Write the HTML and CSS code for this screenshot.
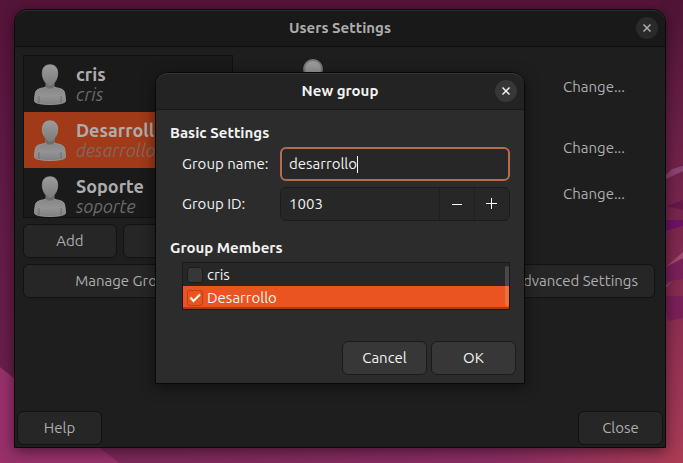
FILE: index.html
```html
<!DOCTYPE html>
<html lang="en">
<head>
<meta charset="utf-8">
<title>Users Settings</title>
<link rel="stylesheet" href="styles.css">
</head>
<body>
<svg class="wallpaper" viewBox="0 0 683 463" preserveAspectRatio="none" aria-hidden="true">
  <defs>
    <linearGradient id="sky" x1="0" y1="0" x2="0" y2="1">
      <stop offset="0" stop-color="#551439"/>
      <stop offset=".5" stop-color="#631c47"/>
      <stop offset="1" stop-color="#6b2049"/>
    </linearGradient>
    <linearGradient id="hill" x1="0" y1="0" x2="1" y2="0">
      <stop offset="0" stop-color="#7a2857"/>
      <stop offset=".7" stop-color="#8a2c63"/>
      <stop offset="1" stop-color="#ab3b55"/>
    </linearGradient>
    <linearGradient id="east" x1="0" y1="0" x2="0" y2="1">
      <stop offset="0" stop-color="#4e1436"/>
      <stop offset=".3" stop-color="#6c2047"/>
      <stop offset=".6" stop-color="#83294f"/>
      <stop offset="1" stop-color="#a73a56"/>
    </linearGradient>
  </defs>
  <path fill="url(#sky)" d="M0 0h683v463H0z"/>
  <path fill="url(#hill)" d="M60 440h623v23H60z"/>
  <path fill="#97306b" d="M0 367L119 463H0z"/>
  <path fill="url(#east)" d="M660 0h23v450h-23z"/>
  <path fill="#8c4474" d="M664 177l8-8 11-3v5l-19 9z"/>
  <path fill="#65184a" d="M667 206l16-6v10z"/>
  <path fill="#6d1263" d="M664 220h19v6l-19 5z"/>
  <path fill="#7a1f58" d="M664 267l19-10v22l-19 3zM664 296h19v22l-15 3z"/>
  <path fill="#a04a72" d="M666 267l17-15v6zM664 287l8-6-5 6z"/>
</svg>

<main class="window">
  <header class="titlebar">
    <h1>Users Settings</h1>
    <button class="close" aria-label="Close window"><svg viewBox="0 0 22 22"><path d="M7.500 7.500l7 7m0-7l-7 7"/></svg></button>
  </header>
  <div class="content">
    <div class="columns">
      <section class="side">
        <svg class="defs" aria-hidden="true">
          <defs>
            <linearGradient id="skin" x1="0" y1="0" x2="0" y2="1">
              <stop offset="0" stop-color="#9c9c9c"/><stop offset="1" stop-color="#7c7c7c"/>
            </linearGradient>
            <linearGradient id="shirt" x1="0" y1="0" x2="0" y2="1">
              <stop offset="0" stop-color="#808080"/><stop offset=".6" stop-color="#949494"/><stop offset="1" stop-color="#808080"/>
            </linearGradient>
            <symbol id="person" viewBox="0 0 32 41">
              <path fill="url(#shirt)" stroke="#a0a0a0" stroke-width=".8" d="M12 19v4c-2 1-8 1-10 4C1 29 .5 34 .5 37c0 2 6 3.500 15.500 3.500S31.500 39 31.500 37c0-3-.5-8-1.500-10-2-3-8-3-10-4v-4z"/>
              <path fill="#666" opacity=".8" d="M12 19l4 3 4-3v4c-2 2-6 2-8 0z"/>
              <path fill="url(#skin)" stroke="#a0a0a0" stroke-width=".7" d="M16 .7c5 0 7.700 3.300 7.700 8.300 0 6-3.700 12-7.700 12S8.300 15 8.300 9C8.300 4 11 .7 16 .7z"/>
              <path fill="none" stroke="#666" stroke-width=".8" d="M9.500 15c1.500 4 4 6.300 6.500 6.300s5-2.300 6.500-6.300M5 32v7M27 32v7"/>
            </symbol>
          </defs>
        </svg>
        <ul class="users">
          <li><svg class="avatar"><use href="#person"/></svg><div><b>cris</b><i>cris</i></div></li>
          <li class="selected"><svg class="avatar"><use href="#person"/></svg><div><b>Desarrollo</b><i>desarrollo</i></div></li>
          <li><svg class="avatar"><use href="#person"/></svg><div><b>Soporte</b><i>soporte</i></div></li>
        </ul>
        <div class="pair"><button class="btn">Add</button><button class="btn" aria-label="Delete"></button></div>
        <button class="btn">Manage Groups</button>
      </section>
      <section class="details">
        <div class="face"></div>
        <button class="change">Change...</button>
        <button class="change">Change...</button>
        <button class="change">Change...</button>
        <button class="btn advanced">Advanced Settings</button>
      </section>
    </div>
    <footer class="actions"><button class="btn">Help</button><button class="btn">Close</button></footer>
  </div>

  <form class="dialog" role="dialog" aria-labelledby="dialog-title">
    <header class="titlebar">
      <h2 id="dialog-title">New group</h2>
      <button type="button" class="close" aria-label="Close dialog"><svg viewBox="0 0 22 22"><path d="M7.500 7.500l7 7m0-7l-7 7"/></svg></button>
    </header>
    <div class="form">
      <h3>Basic Settings</h3>
      <div class="fields">
        <label for="name">Group name:</label>
        <div class="entry focus"><input id="name" value="desarrollo"><span class="caret"></span></div>
        <label for="gid">Group ID:</label>
        <div class="entry">
          <input id="gid" value="1003">
          <button type="button" class="step" aria-label="Decrease"><svg viewBox="0 0 12 12"><path d="M1 6.500h10"/></svg></button>
          <button type="button" class="step" aria-label="Increase"><svg viewBox="0 0 12 12"><path d="M0 5.500h11M5.500 0v11"/></svg></button>
        </div>
      </div>
      <h3>Group Members</h3>
      <div class="members">
        <label><input type="checkbox">cris</label>
        <label class="on"><input type="checkbox" checked>Desarrollo</label>
        <span class="scroll"></span>
      </div>
      <div class="dialog-actions"><button type="button" class="btn">Cancel</button><button type="button" class="btn">OK</button></div>
    </div>
  </form>
</main>
</body>
</html>
```

FILE: styles.css
```css
* { box-sizing: border-box; }

body {
  margin: 0;
  height: 100vh;
  display: flex;
  padding: 9px 17px 15px 14px;
  background: #631c47;
  color: #adadad;
  font: 15px/20px Ubuntu, "Noto Sans", "Open Sans", sans-serif;
  overflow: hidden;
}

button, input { font: inherit; color: inherit; margin: 0; }
h1, h2, h3 { margin: 0; font-size: 15px; line-height: 20px; }

.wallpaper { position: absolute; inset: 0; width: 100%; height: 100%; z-index: -1; }
.defs { position: absolute; width: 0; height: 0; }

.window {
  position: relative;
  flex: 1;
  display: flex;
  flex-direction: column;
  border: 1px solid #0a0a0a;
  border-radius: 13px 13px 0 0;
  background: #1e1e1e;
  box-shadow: 0 3px 14px rgba(0, 0, 0, .5);
}

.titlebar {
  position: relative;
  display: flex;
  align-items: center;
  justify-content: center;
  height: 37px;
  border-bottom: 1px solid #101010;
  border-radius: 12px 12px 0 0;
  background: #191919;
  box-shadow: inset 0 1px #2b2b2b;
}

.close {
  position: absolute;
  right: 7px;
  width: 22px;
  height: 22px;
  padding: 0;
  border: 0;
  border-radius: 50%;
  background: #2a2a2a;
}
.close svg { display: block; fill: none; stroke: currentColor; stroke-width: 1.500; }

.content { flex: 1; display: flex; flex-direction: column; justify-content: space-between; padding: 8px 2px 2px; }
.columns { display: flex; gap: 33px; padding: 0 8px 0 6px; }

.btn {
  min-width: 85px;
  height: 34px;
  padding: 0 16px;
  border: 1px solid #121212;
  border-radius: 6px;
  background: #262626;
}

.side { width: 210px; display: flex; flex-direction: column; gap: 6px; }
.users {
  height: 163px;
  margin: 0;
  padding: 0;
  list-style: none;
  border: 1px solid #101010;
  background: #1a1a1a;
  overflow: hidden;
}
.users li { display: flex; gap: 10px; height: 56px; padding: 8px 10px; }
.users b, .users i { display: block; font-size: 18px; line-height: 20px; }
.users i { color: #6b6b6b; }
.users .selected { background: #a03a18; }
.users .selected i { color: #80675f; }
.avatar { width: 32px; height: 41px; }
.pair { display: grid; grid-template-columns: 94px 1fr; gap: 6px; }

.details { flex: 1; display: grid; grid-template-columns: 1fr auto; grid-template-rows: 61px 61px 31px 56px 34px; }
.face { grid-area: 1 / 1; width: 20px; height: 20px; margin: 4px 37px; border-radius: 50%; border: 2px solid #777; background: #999; }
.change { grid-column: 2; align-self: start; justify-self: end; margin: 18px 16px 0; padding: 4px 14px; border: 0; background: none; }
.change + .change { margin-top: 18px; }
.change + .change + .change { margin-top: 3px; }
.advanced { grid-area: 5 / 2; }

.actions, .dialog-actions { display: flex; justify-content: space-between; }

.dialog {
  position: absolute;
  top: 62px;
  left: 50%;
  width: 370px;
  transform: translateX(-50%);
  border: 1px solid #080808;
  border-radius: 13px 13px 0 0;
  background: #2c2c2c;
  color: #f2f2f2;
  box-shadow: 0 3px 14px rgba(0, 0, 0, .5);
}
.dialog .titlebar { background: #232323; border-color: #181818; box-shadow: inset 0 1px #363636; }
.dialog .close { background: #373737; }
.dialog .btn { background: #373737; border-color: #1b1b1b; }

.form { padding: 13px 8px 8px 14px; }
.fields {
  display: grid;
  grid-template-columns: 98px minmax(0, 1fr);
  gap: 6px 0;
  align-items: center;
  margin: 4px 6px 17px 12px;
}
.entry {
  display: flex;
  align-items: center;
  height: 34px;
  border: 1px solid #1b1b1b;
  border-radius: 6px;
  background: #272727;
}
.entry input { flex: 1; min-width: 0; padding: 0 8px; border: 0; background: none; outline: 0; }
.entry.focus { border: 2px solid #b76a4e; }
.entry.focus input { flex: none; field-sizing: content; padding: 0 0 0 7px; }
.caret { width: 1px; height: 17px; background: #fff; }
.step { width: 35px; height: 32px; padding: 0; border: 0; border-left: 1px solid #202020; background: none; }
.step svg { display: block; width: 12px; height: 12px; margin: auto; stroke: #fff; }

.members { position: relative; margin: 4px 6px 0 12px; border: 1px solid #191919; background: #272727; }
.members label { display: flex; align-items: center; gap: 4px; height: 23px; padding-left: 4px; }
.members .on { background: #e95420; box-shadow: inset 0 -2px #a83c17; }
.members input {
  appearance: none;
  width: 16px;
  height: 16px;
  border: 1px solid #1b1b1b;
  border-radius: 3px;
  background: #373737;
}
.members input:checked {
  border-color: #b8421a;
  background: #e95420 url("data:image/svg+xml,%3Csvg xmlns='http://www.w3.org/2000/svg' viewBox='0 0 14 14'%3E%3Cpath d='M2.500 6.500l3 3.500L12 3.500' fill='none' stroke='white' stroke-width='2'/%3E%3C/svg%3E");
}
.scroll { position: absolute; top: 3px; right: 0; bottom: 3px; width: 4px; border-radius: 2px; background: rgba(255, 255, 255, .16); }
.dialog-actions { justify-content: flex-end; gap: 4px; margin-top: 31px; }
```
